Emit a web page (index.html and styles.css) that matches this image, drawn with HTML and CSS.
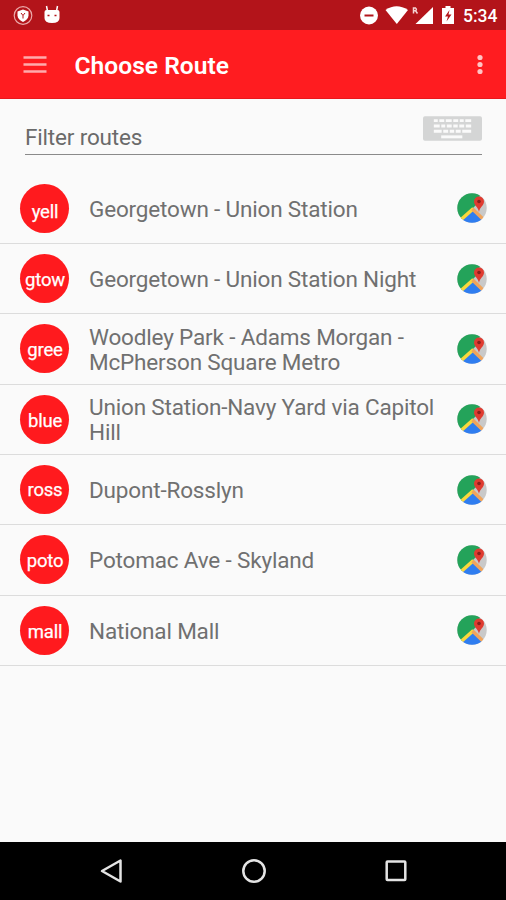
FILE: index.html
```html
<!DOCTYPE html>
<html lang="en">
<head>
<meta charset="utf-8">
<title>Choose Route</title>
<link rel="stylesheet" href="styles.css">
</head>
<body>
<svg class="defs" width="0" height="0" aria-hidden="true">
  <defs><clipPath id="disc"><circle cx="15" cy="15" r="14.700"/></clipPath></defs>
  <symbol id="map" viewBox="0 0 30 30">
    <g clip-path="url(#disc)">
      <rect width="30" height="30" fill="#c9c9c9"/>
      <path d="M0 0H24L19 12L3 28H0Z" fill="#24a35a"/>
      <path d="M15 17L30 32H0Z" fill="#2f7df0"/>
      <path d="M16.500 15.500L3 27.500" stroke="#fbd83c" stroke-width="3.600"/>
      <path d="M15.500 16L28 28" stroke="#f0a45c" stroke-width="3.400"/>
    </g>
    <path d="M22 19C21.500 14.500 17 12.500 17 8.500A5 5 0 0 1 27 8.500C27 12.500 22.500 14.500 22 19Z" fill="#df3b30"/>
    <circle cx="22" cy="8.500" r="1.800" fill="#86201c"/>
  </symbol>
</svg>
<div class="screen">
  <header class="status">
    <svg width="62" height="30" viewBox="0 0 62 30">
      <circle cx="23" cy="15.500" r="8.800" fill="none" stroke="#eba9aa" stroke-width="1.200"/>
      <path d="M23 9.500L28.500 11.500V15.500C28.500 18.500 26 20.500 23 22C20 20.500 17.500 18.500 17.500 15.500V11.500Z" fill="#fff"/>
      <path d="M21 13L23 15.500L25 13M23 15.500V18.500" fill="none" stroke="#b3141a" stroke-width="1"/>
      <path d="M44.500 12Q44.500 10 46.500 10H57.500Q59.500 10 59.500 12V18Q59.500 23 52 23Q44.500 23 44.500 18Z" fill="#fff"/>
      <path d="M47.500 11L46.500 6M56.500 11L57.500 6" stroke="#fff" stroke-width="1.500"/>
      <path d="M47.500 15.500h2M54.500 15.500h2" stroke="#b3141a" stroke-width="1.300"/>
    </svg>
    <div class="status-right">
      <svg width="98" height="30" viewBox="358 0 98 30">
        <circle cx="369" cy="15.500" r="9" fill="#fff"/><path d="M364.500 15.500h9" stroke="#b3141a" stroke-width="2"/>
        <path d="M385.500 10Q396.500 2.500 408 10L396.800 24Z" fill="#fff"/>
        <path d="M433 7V24H415.500Z" fill="#fff"/>
        <path d="M413.500 13.500V8H415.500Q417.300 9.500 415.500 10.800H413.500M415.500 10.800L417.500 13.500" fill="none" stroke="#f5d4d4" stroke-width="1.500"/>
        <path d="M442 8H445.500V6H450.500V8H454V24H442Z" fill="#fff"/>
        <path d="M449.500 10L445 16.500H448L446.500 21.500L451.500 14.500H448.500Z" fill="#b3141a"/>
      </svg>
      <span class="clock">5:34</span>
    </div>
  </header>
  <div class="toolbar">
    <svg width="24" height="18" viewBox="0 0 24 18"><path d="M0.500 1.500h23M0.500 8.500h23M0.500 15.500h23" stroke="#ffabac" stroke-width="2.400"/></svg>
    <h1>Choose Route</h1>
    <svg width="6" height="22" viewBox="0 0 6 22" fill="#ffc4c4"><circle cx="3" cy="3.500" r="2.600"/><circle cx="3" cy="10.500" r="2.600"/><circle cx="3" cy="17.500" r="2.600"/></svg>
  </div>
  <div class="filter">
    <span>Filter routes</span>
    <svg width="59" height="25" viewBox="0 0 60 25">
      <rect width="60" height="25" rx="2" fill="#d4d5d5"/>
      <g stroke="#fafafa" stroke-width="3" fill="none">
        <path d="M11 4.500H49" stroke-dasharray="4 1.600 5 1.600 6 1.600 5 1.600 4 1.600 8"/>
        <path d="M11 10H49" stroke-dasharray="6 1.600 4 1.600 5 1.600 4.500 1.600 5 1.600 7"/>
        <path d="M11 15.300H49" stroke-dasharray="8 1.600 5 1.600 4.500 1.600 5 1.600 10"/>
        <path d="M18.500 21H40"/>
      </g>
    </svg>
  </div>
  <ul class="routes">
    <li><b class="low">yell</b><p>Georgetown - Union Station</p><svg class="map"><use href="#map"/></svg></li>
    <li><b>gtow</b><p>Georgetown - Union Station Night</p><svg class="map"><use href="#map"/></svg></li>
    <li><b>gree</b><p>Woodley Park - Adams Morgan -<br>McPherson Square Metro</p><svg class="map"><use href="#map"/></svg></li>
    <li><b>blue</b><p>Union Station-Navy Yard via Capitol<br>Hill</p><svg class="map"><use href="#map"/></svg></li>
    <li><b class="high">ross</b><p>Dupont-Rosslyn</p><svg class="map"><use href="#map"/></svg></li>
    <li><b>poto</b><p>Potomac Ave - Skyland</p><svg class="map"><use href="#map"/></svg></li>
    <li><b>mall</b><p>National Mall</p><svg class="map"><use href="#map"/></svg></li>
  </ul>
  <nav class="navbar">
    <svg width="24" height="26" viewBox="0 0 24 26"><path d="M2 13L20.500 2.500V23.500Z"/></svg>
    <svg width="26" height="26" viewBox="0 0 26 26"><circle cx="13" cy="13" r="10.700"/></svg>
    <svg width="24" height="26" viewBox="0 0 24 26"><rect x="2.700" y="3.400" width="18.600" height="18.600" rx="0.800"/></svg>
  </nav>
</div>
</body>
</html>
```
FILE: styles.css
```css
* { box-sizing: border-box; margin: 0; padding: 0; }
body { font-family: Roboto, sans-serif; background: #fafafa; }
svg { display: block; flex: none; }
.defs { position: absolute; }
.screen { width: 506px; height: 900px; display: flex; flex-direction: column; overflow: hidden; }
.status { height: 30px; flex: none; display: flex; justify-content: space-between; background: #b3141a; }
.status-right { display: flex; align-items: center; gap: 7px; padding-right: 9px; }
.clock { width: 34px; color: #fff; font-size: 17.500px; font-weight: 500; line-height: 30px; padding-top: 2px; white-space: nowrap; }
.toolbar { height: 69px; flex: none; display: flex; align-items: center; padding: 1px 23px 0; background: #ff1c20; border-bottom: 1px solid #e8181c; }
.toolbar h1 { flex: 1; margin-left: 27.500px; padding-top: 2px; color: #fff; font-size: 24.600px; font-weight: 600; line-height: 30px; }
.filter { height: 56px; flex: none; margin: 0 24px 0 25px; display: flex; justify-content: space-between; border-bottom: 1.500px solid #8a8a8a; }
.filter span { padding-top: 24px; font-size: 22.500px; letter-spacing: -0.170px; line-height: 28px; color: #6a6a6a; }
.filter svg { margin-top: 17px; }
.routes { list-style: none; margin-top: 18.600px; flex: 1; }
.routes li { height: 70.330px; display: flex; align-items: center; padding: 0 19px 0 20px; border-bottom: 1.500px solid #dcdcdc; }
.routes b { width: 49px; height: 49px; flex: none; border-radius: 50%; background: #ff1a1e; color: #fff; font-size: 18.500px; font-weight: 400; letter-spacing: -0.200px; line-height: 53px; text-align: center; padding-left: 1px; -webkit-text-stroke: 0.250px #fff; }
.routes .low { line-height: 56px; }
.routes .high { line-height: 50px; }
.routes p { flex: 1; margin-left: 20px; padding-top: 1.400px; font-size: 22.500px; letter-spacing: -0.170px; line-height: 24.500px; color: #707070; white-space: nowrap; }
.map { width: 30px; height: 30px; }
.navbar { height: 58px; flex: none; display: flex; align-items: center; justify-content: space-between; padding: 0 98px 0 100px; background: #000; }
.navbar svg { fill: none; stroke: #e4e4e4; stroke-width: 2.500; stroke-linejoin: round; }
```
